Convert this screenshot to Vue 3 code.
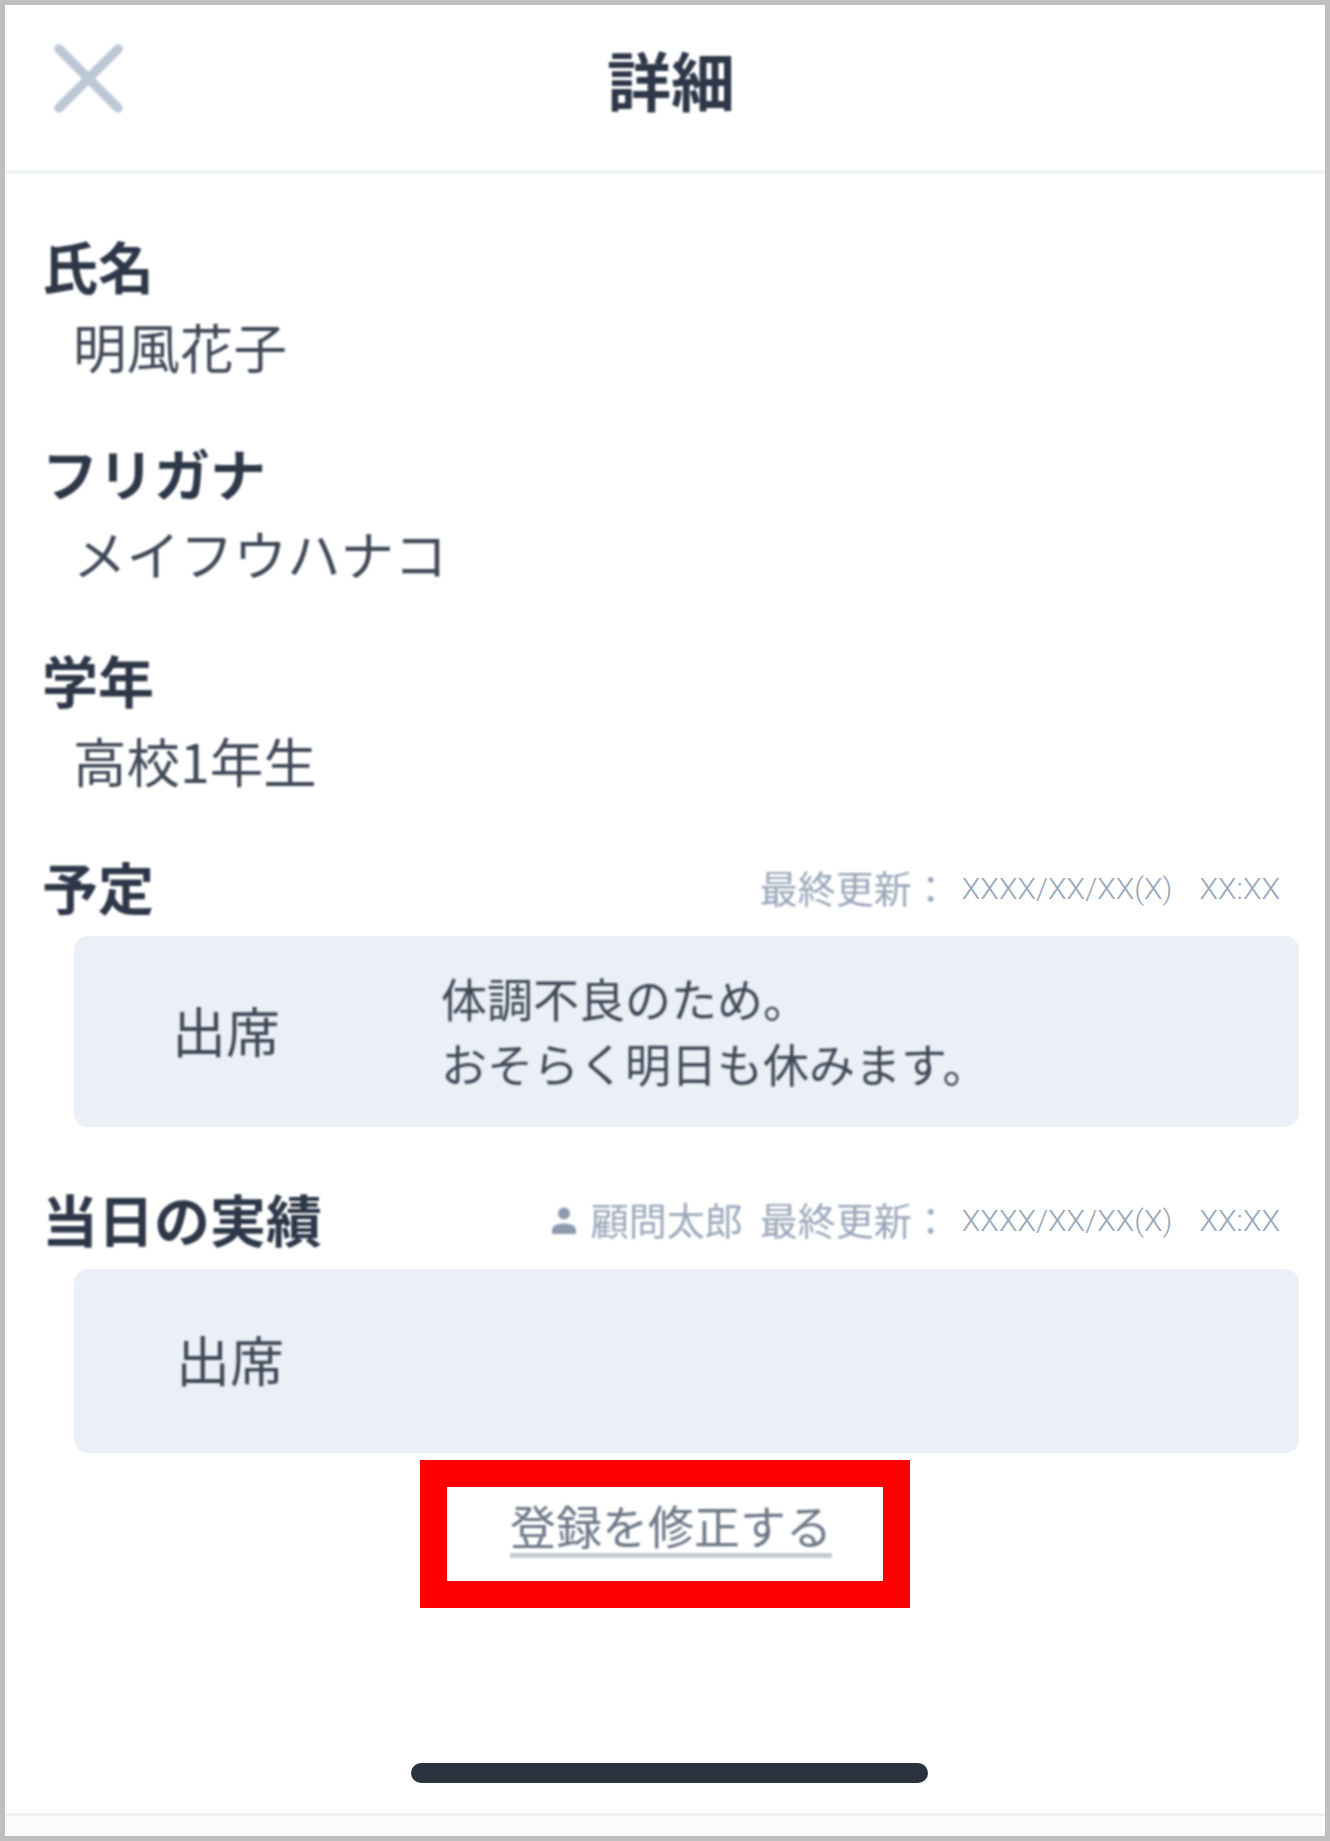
<script setup>
const simpleRows = [
  { label: '氏名', value: '明風花子' },
  { label: 'フリガナ', value: 'メイフウハナコ' },
  { label: '学年', value: '高校1年生' }
]
</script>

<template>
  <div class="frame">
    <header class="header">
      <svg class="close" viewBox="0 0 69 69" aria-label="閉じる">
        <path d="M5 5 L64 64 M64 5 L5 64" />
      </svg>
      <h1 class="title">詳細</h1>
    </header>

    <main class="body">
      <section v-for="row in simpleRows" :key="row.label" class="row">
        <h2 class="label">{{ row.label }}</h2>
        <p class="value">{{ row.value }}</p>
      </section>

      <section class="plan">
        <div class="head">
          <h2 class="label">予定</h2>
          <div class="meta">
            <span class="meta-key">最終更新：</span>
            <span class="meta-date">XXXX/XX/XX(X)</span>
            <span class="meta-time">XX:XX</span>
          </div>
        </div>
        <div class="card card-plan">
          <span class="status">出席</span>
          <p class="reason">体調不良のため。<br />おそらく明日も休みます。</p>
        </div>
      </section>

      <section class="actual">
        <div class="head">
          <h2 class="label">当日の実績</h2>
          <div class="meta">
            <svg class="person" viewBox="0 0 26 27">
              <circle cx="13" cy="6.5" r="6" />
              <path d="M1 27 V23 C1 18.5 7 16.5 13 16.5 C19 16.5 25 18.5 25 23 V27 Z" />
            </svg>
            <span class="meta-name">顧問太郎</span>
            <span class="meta-key">最終更新：</span>
            <span class="meta-date">XXXX/XX/XX(X)</span>
            <span class="meta-time">XX:XX</span>
          </div>
        </div>
        <div class="card card-actual">
          <span class="status">出席</span>
        </div>
      </section>

      <div class="edit-wrap">
        <div class="edit-frame">
          <a class="edit">登録を修正する</a>
        </div>
      </div>

      <div class="home-wrap"><div class="home"></div></div>
    </main>

    <footer class="footer"></footer>
  </div>
</template>

<style>
html, body { margin: 0; background: #fff; }
</style>

<style scoped>
.frame {
  width: 1330px;
  height: 1841px;
  box-sizing: border-box;
  border: 5px solid #bfbfbf;
  background: #fff;
  display: flex;
  flex-direction: column;
  overflow: hidden;
  font-family: "Noto Sans CJK JP", "Noto Sans", sans-serif;
  color: #2d3748;
}
.header {
  height: 165px;
  flex: none;
  box-sizing: content-box;
  border-bottom: 4px solid #edf2f7;
  display: grid;
  grid-template-columns: 1fr auto 1fr;
  align-items: center;
  padding: 0 37px 0 49px;
}
.close {
  width: 69px;
  height: 69px;
  margin-top: -18px;
  filter: blur(0.8px);
}
.close path {
  fill: none;
  stroke: #bcc8d5;
  stroke-width: 9.5;
  stroke-linecap: round;
}
.title {
  grid-column: 2;
  margin: -19px 0 0;
  font-size: 64px;
  line-height: 80px;
  font-weight: 700;
  filter: blur(0.8px);
}
.body {
  flex: 1;
  display: flex;
  flex-direction: column;
  padding-top: 60px;
}
.row {
  padding: 0 37px;
  margin-bottom: 47px;
}
.label {
  margin: 0;
  height: 62px;
  font-size: 56px;
  line-height: 62px;
  font-weight: 700;
  white-space: nowrap;
  filter: blur(0.8px);
}
.value {
  margin: 0;
  height: 98px;
  padding-left: 31px;
  font-size: 53.5px;
  line-height: 100px;
  color: #3f4856;
  white-space: nowrap;
  filter: blur(0.8px);
}
.plan,
.actual {
  padding: 0 26px 0 37px;
}
.actual {
  margin-top: 60px;
}
.head {
  display: flex;
  justify-content: space-between;
  align-items: center;
  height: 62px;
}
.meta {
  display: flex;
  align-items: center;
  height: 62px;
  margin: 3px 0 -3px;
  padding-right: 19px;
  color: #9aa7ba;
  white-space: nowrap;
}
.person {
  width: 26px;
  height: 27px;
  margin-right: 14px;
  margin-bottom: 2px;
  fill: #8d9bae;
  filter: blur(0.8px);
}
.meta-name,
.meta-key {
  font-size: 38px;
  line-height: 62px;
  margin-bottom: 4px;
  filter: blur(0.8px);
}
.meta-name {
  margin-right: 17px;
}
.meta-date,
.meta-time {
  font-family: "Roboto", "Liberation Sans", sans-serif;
  font-weight: 300;
  font-size: 30.3px;
  line-height: 62px;
}
.meta-date {
  margin-left: 12px;
}
.meta-time {
  margin-left: 27px;
}
.card {
  margin: 19px 0 0 32px;
  background: #ebf0f7;
  border-radius: 14px;
  display: flex;
  align-items: center;
  box-sizing: border-box;
  padding-bottom: 4px;
}
.card-plan {
  height: 191px;
  padding-left: 98px;
}
.card-actual {
  margin-top: 20px;
  height: 184px;
  padding-left: 102px;
}
.status {
  font-size: 54px;
  line-height: 70px;
  color: #3f4856;
  flex: none;
  width: 269px;
  filter: blur(0.8px);
}
.reason {
  margin: 0;
  font-size: 46px;
  line-height: 65px;
  color: #3f4856;
  white-space: nowrap;
  filter: blur(0.8px);
}
.edit-wrap {
  margin-top: 7px;
  display: flex;
  justify-content: center;
}
.edit-frame {
  width: 490px;
  height: 148px;
  box-sizing: border-box;
  border: 27px solid #ff0000;
  display: flex;
  justify-content: center;
  align-items: flex-start;
  padding: 8px 0 0 12px;
}
.edit {
  font-size: 46px;
  line-height: 58px;
  color: #6b7686;
  border-bottom: 5px solid #c2cad4;
  white-space: nowrap;
  filter: blur(0.8px);
}
.home-wrap {
  margin-top: 155px;
  display: flex;
  justify-content: center;
  padding-left: 9px;
}
.home {
  width: 517px;
  height: 20px;
  border-radius: 10px;
  background: #2b333f;
}
.footer {
  flex: none;
  height: 23px;
  box-sizing: border-box;
  border-top: 3px solid #f1f1f1;
  background: #fbfbfb;
}
</style>
